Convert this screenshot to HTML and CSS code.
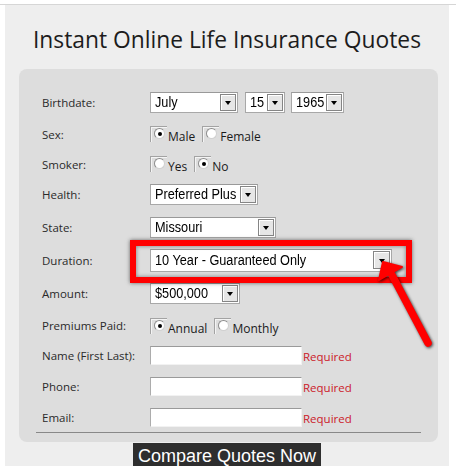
FILE: index.html
```html
<!DOCTYPE html>
<html>
<head>
<meta charset="utf-8">
<link rel="stylesheet" href="styles.css">
</head>
<body>
<div class="topline"></div>
<div class="page">
  <h1 class="title">Instant Online Life Insurance Quotes</h1>
  <div class="panel">
    <div class="form">
      <div class="lbl">Birthdate:</div>
      <div class="ctl">
        <div class="sel w-month"><span class="val">July</span><span class="drop"></span></div>
        <div class="sel w-day"><span class="val">15</span><span class="drop"></span></div>
        <div class="sel w-year"><span class="val">1965</span><span class="drop"></span></div>
      </div>

      <div class="lbl">Sex:</div>
      <div class="ctl radios">
        <span class="rbox"><span class="rad on"></span></span><span class="rtxt">Male</span>
        <span class="rbox"><span class="rad"></span></span><span class="rtxt">Female</span>
      </div>

      <div class="lbl">Smoker:</div>
      <div class="ctl radios radios-tight">
        <span class="rbox"><span class="rad"></span></span><span class="rtxt">Yes</span>
        <span class="rbox"><span class="rad on"></span></span><span class="rtxt">No</span>
      </div>

      <div class="lbl">Health:</div>
      <div class="ctl">
        <div class="sel w-health"><span class="val">Preferred Plus</span><span class="drop"></span></div>
      </div>

      <div class="lbl">State:</div>
      <div class="ctl">
        <div class="sel w-state"><span class="val">Missouri</span><span class="drop"></span></div>
      </div>

      <div class="lbl">Duration:</div>
      <div class="ctl">
        <div class="sel sel-tall w-duration"><span class="val">10 Year - Guaranteed Only</span><span class="drop"></span></div>
      </div>

      <div class="lbl">Amount:</div>
      <div class="ctl">
        <div class="sel w-amount"><span class="val">$500,000</span><span class="drop"></span></div>
      </div>

      <div class="lbl">Premiums Paid:</div>
      <div class="ctl radios">
        <span class="rbox"><span class="rad on"></span></span><span class="rtxt">Annual</span>
        <span class="rbox"><span class="rad"></span></span><span class="rtxt">Monthly</span>
      </div>

      <div class="lbl">Name (First Last):</div>
      <div class="ctl"><input class="txt" type="text"><span class="req">Required</span></div>

      <div class="lbl">Phone:</div>
      <div class="ctl"><input class="txt" type="text"><span class="req">Required</span></div>

      <div class="lbl">Email:</div>
      <div class="ctl"><input class="txt" type="text"><span class="req">Required</span></div>
    </div>
    <div class="rule"></div>

    <div class="callout"></div>
    <svg class="arrow" width="70" height="100" viewBox="0 0 70 100">
      <path d="M22 25 L58 93" stroke="#ff0000" stroke-width="7.5" stroke-linecap="round" fill="none"/>
      <path d="M13 12 L9 30 L32 17 Z" fill="#ff0000" stroke="#ff0000" stroke-width="2" stroke-linejoin="round"/>
    </svg>
  </div>
  <div class="btnwrap"><button class="submit" type="button">Compare Quotes Now</button></div>
</div>
</body>
</html>
```
FILE: styles.css
```css
html, body {
  margin: 0;
  padding: 0;
  overflow: hidden;
  background: #ffffff;
}

.topline {
  height: 4px;
  border-bottom: 1px solid #d6d6d6;
}

.page {
  margin: 0 7px 0 5px;
  background: #eeeeee;
  height: 470px;
}

.title {
  margin: 0;
  padding-top: 19px;
  font: 400 22.8px/32px "Open Sans", sans-serif;
  color: #1c1c1c;
  text-align: center;
}

.panel {
  position: relative;
  margin: 13px 11px 0 14px;
  background: #dddddd;
  border-radius: 8px;
  padding: 17px 0 9px 23px;
}

.form {
  display: grid;
  grid-template-columns: 108px auto;
  grid-template-rows: 32px 32px 28px 32px 34px 32px 34px 30px 30px 32px 30px;
}

.lbl {
  display: flex;
  align-items: center;
  font: 11.5px "Open Sans", sans-serif;
  color: #2a2a2a;
}

.ctl {
  display: flex;
  align-items: center;
}

.sel {
  box-sizing: border-box;
  display: flex;
  align-items: center;
  height: 21px;
  margin-right: 6px;
  background: #ffffff;
  border: 1px solid #a8a8a8;
  border-top-color: #999999;
  padding-left: 4px;
  font: 15.5px "Liberation Sans", Arial, sans-serif;
  color: #000;
}

.sel-tall {
  height: 23px;
}

.val {
  flex: 1 1 0;
  min-width: 0;
  white-space: nowrap;
  transform: scaleX(0.82);
  transform-origin: left center;
}

.drop {
  box-sizing: border-box;
  flex: none;
  width: 16px;
  height: 17px;
  margin-left: auto;
  margin-right: 1px;
  border: 1px solid #858585;
  background: #e6e6e6;
  box-shadow: inset 1px 1px 0 #ffffff;
  display: flex;
  align-items: center;
  justify-content: center;
}

.sel-tall .drop {
  width: 17px;
  height: 18px;
}

.drop::after {
  content: "";
  width: 0;
  height: 0;
  border-left: 3.5px solid transparent;
  border-right: 3.5px solid transparent;
  border-top: 4px solid #000;
  margin-top: 1px;
}

.w-month { width: 88px; margin-right: 7px; }
.w-day { width: 40px; }
.w-year { width: 53px; }
.w-health { width: 108px; }
.w-state { width: 126px; }
.w-duration { width: 242px; }
.w-amount { width: 90px; }

.radios {
  align-items: flex-start;
  padding-top: 8px;
  box-sizing: border-box;
}

.radios-tight {
  padding-top: 6px;
}

.rbox {
  box-sizing: border-box;
  width: 17px;
  height: 16px;
  border-top: 1px solid #a3a3a3;
  border-left: 1px solid #a3a3a3;
  box-shadow: inset 1px 1px 0 #f4f4f4;
  padding: 1px 0 0 3px;
  flex: none;
}

.rad {
  box-sizing: border-box;
  display: flex;
  align-items: center;
  justify-content: center;
  width: 11px;
  height: 11px;
  border-radius: 50%;
  background: #ffffff;
  border: 1px solid #8c8c8c;
  border-right-color: #d0d0d0;
  border-bottom-color: #d0d0d0;
}

.rad.on::after {
  content: "";
  width: 4px;
  height: 4px;
  border-radius: 50%;
  background: #000;
}

.rtxt {
  font: 12px "Open Sans", sans-serif;
  color: #1a1a1a;
  margin: 3px 7px 0 1px;
  line-height: 16px;
}

.txt {
  box-sizing: border-box;
  width: 152px;
  height: 19px;
  margin: 0;
  padding: 0 2px;
  background: #ffffff;
  border: 1px solid #f2f2f2;
  border-top-color: #9a9a9a;
  border-left-color: #acacac;
  outline: none;
}

.req {
  margin-left: 1px;
  font: 11.5px "Open Sans", sans-serif;
  color: #cc1a2a;
  padding-top: 2px;
}

.rule {
  height: 1px;
  background: #888888;
  margin: 0 17px 0 -6px;
}

.callout {
  position: absolute;
  left: 111px;
  top: 171px;
  width: 282px;
  height: 43px;
  box-sizing: border-box;
  border: 6px solid #ff0000;
  box-shadow: 0 0 4px rgba(0, 0, 0, 0.55), inset 0 0 4px rgba(0, 0, 0, 0.45);
}

.arrow {
  position: absolute;
  left: 351px;
  top: 181px;
  overflow: visible;
  filter: drop-shadow(1px 1px 1.5px rgba(0, 0, 0, 0.75));
}

.btnwrap {
  text-align: center;
  padding-top: 1px;
}

.submit {
  height: 26px;
  padding: 0 5px;
  border: none;
  border-radius: 0;
  background: #2e2e2e;
  color: #ffffff;
  font: 18px/26px "Liberation Sans", Arial, sans-serif;
}
```
